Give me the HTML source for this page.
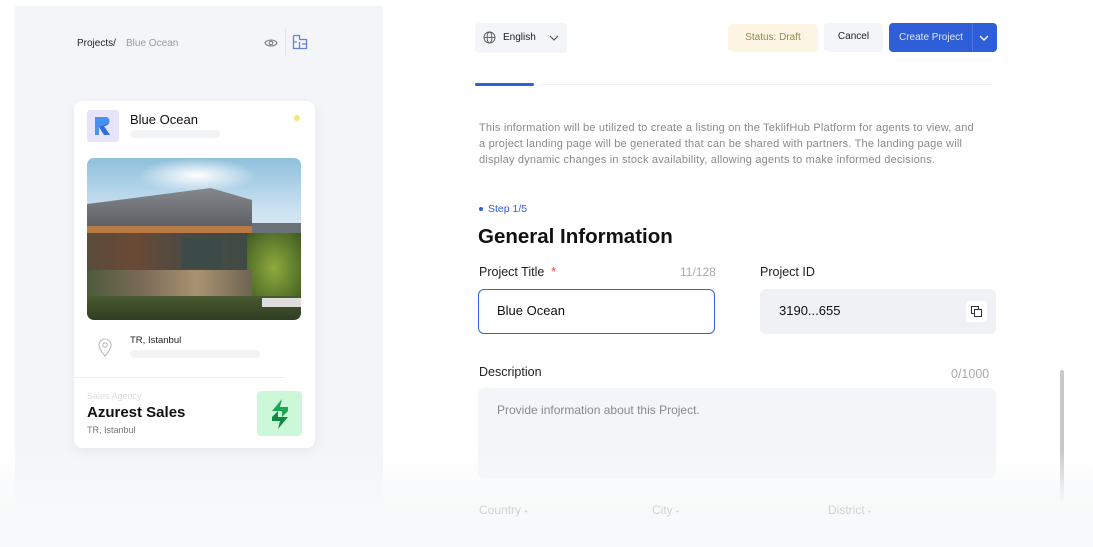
<!DOCTYPE html>
<html><head><meta charset="utf-8"><style>
*{margin:0;padding:0;box-sizing:border-box}
body{width:1093px;height:547px;overflow:hidden;background:#fff;font-family:"Liberation Sans",sans-serif;position:relative;color:#111}
.a{position:absolute}
.t{white-space:nowrap}
</style></head><body>
<div class="a" style="left:15px;top:6px;width:368px;height:541px;background:#f3f5f9"></div>
<div class="a t" style="left:77px;top:38px;font-size:10px;color:#222">Projects/</div>
<div class="a t" style="left:126px;top:38px;font-size:10px;color:#999">Blue Ocean</div>
<svg class="a" style="left:264px;top:37px" width="14" height="12" viewBox="0 0 14 12"><path d="M1 6C3 2 11 2 13 6C11 10 3 10 1 6Z" fill="none" stroke="#777" stroke-width="1.1"/><circle cx="7" cy="6" r="1.8" fill="none" stroke="#777" stroke-width="1.1"/></svg>
<div class="a" style="left:285px;top:28px;width:1px;height:28px;background:#e2e5ea"></div>
<svg class="a" style="left:292px;top:34px" width="16" height="16" viewBox="0 0 16 16"><path d="M1.5 1.5H7.5V5.5M7.5 8V14.5H1.5V1.5M1.5 8H5M7.5 5.5H14.5V14.5H7.5M10 10H14.5" fill="none" stroke="#6b7fd7" stroke-width="1.3"/></svg>
<div class="a" style="left:74px;top:101px;width:241px;height:347px;background:#fff;border-radius:8px;box-shadow:0 4px 14px rgba(0,0,0,.05)"></div>
<div class="a" style="left:87px;top:110px;width:32px;height:32px;background:#e7e3fb;border-radius:3px"></div>
<svg class="a" style="left:94px;top:116px" width="18" height="20" viewBox="0 0 18 20"><path d="M1 1H11C15 1 16 4 15 7C14 9 12 10 10 10L16 19H10L5 11V19H1Z" fill="#2f6ce0"/><path d="M1 1H11C15 1 16 4 15 7L5 11V19H1Z" fill="#4a90f0"/></svg>
<div class="a t" style="left:130px;top:112px;font-size:13px;color:#111">Blue Ocean</div>
<div class="a" style="left:130px;top:130px;width:90px;height:8px;background:#f2f3f5;border-radius:4px"></div>
<div class="a" style="left:294px;top:115px;width:6px;height:6px;background:#f4e47a;border-radius:50%"></div>
<div class="a" style="left:87px;top:158px;width:214px;height:162px;border-radius:7px;overflow:hidden;background:linear-gradient(180deg,#8fc0dc 0%,#c7dff0 30%,#dfe9ef 45%)">
<div class="a" style="left:50px;top:0;width:120px;height:35px;background:radial-gradient(ellipse,#fff 0%,rgba(255,255,255,0) 70%)"></div>
<div class="a" style="left:150px;top:65px;width:64px;height:60px;background:#6b7278"></div>
<div class="a" style="left:160px;top:75px;width:54px;height:70px;background:radial-gradient(ellipse,#8faa3c,#3d5a22)"></div>
<div class="a" style="left:0;top:30px;width:165px;height:40px;background:linear-gradient(180deg,#85888c,#5b5e62);clip-path:polygon(0 40%,75% 0,100% 30%,100% 100%,0 100%)"></div>
<div class="a" style="left:0;top:68px;width:165px;height:7px;background:#b87a45"></div>
<div class="a" style="left:0;top:75px;width:160px;height:50px;background:linear-gradient(90deg,#5a4b3c,#6a4a34 30%,#4d4a44 60%,#3f4a44)"></div>
<div class="a" style="left:95px;top:80px;width:40px;height:30px;background:#3c4a48"></div>
<div class="a" style="left:0;top:112px;width:165px;height:30px;background:linear-gradient(90deg,#4c5a3a,#7a6b58,#a89270,#6e6450)"></div>
<div class="a" style="left:0;top:138px;width:214px;height:24px;background:linear-gradient(180deg,#4a5a30,#2f3e22)"></div>
<div class="a" style="left:175px;top:140px;width:39px;height:9px;background:#ddd"></div>
</div>
<svg class="a" style="left:97px;top:338px" width="16" height="20" viewBox="0 0 16 20"><path d="M8 18C4 13 2 10 2 7A6 6 0 0 1 14 7C14 10 12 13 8 18Z" fill="none" stroke="#bbb" stroke-width="1.1"/><circle cx="8" cy="7" r="2.2" fill="none" stroke="#bbb" stroke-width="1.1"/></svg>
<div class="a t" style="left:130px;top:335px;font-size:9.5px;color:#222">TR, Istanbul</div>
<div class="a" style="left:130px;top:350px;width:130px;height:8px;background:#f2f3f5;border-radius:4px"></div>
<div class="a" style="left:74px;top:377px;width:211px;height:1px;background:#eef0f2"></div>
<div class="a t" style="left:87px;top:391px;font-size:9px;color:#ddd">Sales Agency</div>
<div class="a t" style="left:87px;top:404px;font-size:15px;font-weight:bold;color:#111">Azurest Sales</div>
<div class="a t" style="left:87px;top:425px;font-size:9px;color:#777">TR, Istanbul</div>
<div class="a" style="left:257px;top:391px;width:45px;height:45px;background:#cdf7d9;border-radius:4px"></div>
<svg class="a" style="left:268px;top:397px" width="24" height="34" viewBox="0 0 24 34"><path d="M14 2L4 14H14V20L20 14V10H12Z" fill="#1ca653"/><path d="M10 32L20 20H10V14L4 20V24H12Z" fill="#138a42"/></svg>
<div class="a" style="left:475px;top:23px;width:92px;height:30px;background:#f3f5f9;border-radius:4px"></div>
<svg class="a" style="left:483px;top:31px" width="13" height="13" viewBox="0 0 13 13"><circle cx="6.5" cy="6.5" r="5.5" fill="none" stroke="#555" stroke-width=".9"/><ellipse cx="6.5" cy="6.5" rx="2.4" ry="5.5" fill="none" stroke="#555" stroke-width=".9"/><path d="M1 6.5H12" stroke="#555" stroke-width=".9"/></svg>
<div class="a t" style="left:503px;top:32px;font-size:10px;color:#222">English</div>
<svg class="a" style="left:549px;top:35px" width="10" height="6" viewBox="0 0 10 6"><path d="M1 1L5 5L9 1" fill="none" stroke="#555" stroke-width="1.2"/></svg>
<div class="a" style="left:728px;top:24px;width:90px;height:28px;background:#fdf5e3;border-radius:4px;font-size:10px;color:#9a8750;text-align:center;line-height:28px">Status: Draft</div>
<div class="a" style="left:824px;top:23px;width:59px;height:29px;background:#f3f5f9;border-radius:4px;font-size:10px;color:#222;text-align:center;line-height:28px">Cancel</div>
<div class="a" style="left:889px;top:23px;width:108px;height:29px;background:#2f5ed9;border-radius:4px"></div>
<div class="a t" style="left:899px;top:32px;font-size:10px;color:#dfe7ff">Create Project</div>
<div class="a" style="left:972px;top:23px;width:1px;height:29px;background:#5077e0"></div>
<svg class="a" style="left:979px;top:35px" width="10" height="6" viewBox="0 0 10 6"><path d="M1 1L5 5L9 1" fill="none" stroke="#fff" stroke-width="1.4"/></svg>
<div class="a" style="left:475px;top:83px;width:59px;height:3px;background:#2f5ed9;border-radius:2px"></div>
<div class="a" style="left:539px;top:84px;width:454px;height:1px;background:#eef0f3"></div>
<div class="a t" style="left:479px;top:120px;font-size:11px;line-height:16px;color:#8a8a8a;letter-spacing:.2px">This information will be utilized to create a listing on the TeklifHub Platform for agents to view, and<br>a project landing page will be generated that can be shared with partners. The landing page will<br>display dynamic changes in stock availability, allowing agents to make informed decisions.</div>
<div class="a" style="left:479px;top:207px;width:4px;height:4px;background:#2f5ed9;border-radius:50%"></div>
<div class="a t" style="left:488px;top:203px;font-size:10.5px;color:#2f5ed9">Step 1/5</div>
<div class="a t" style="left:478px;top:225px;font-size:20.5px;font-weight:bold;color:#111">General Information</div>
<div class="a t" style="left:479px;top:265px;font-size:12.5px;color:#222">Project Title <span style="color:#e44">&nbsp;*</span></div>
<div class="a t" style="left:680px;top:265px;font-size:12px;color:#aaa">11/128</div>
<div class="a" style="left:478px;top:289px;width:237px;height:45px;border:1.5px solid #2f66dd;border-radius:6px"></div>
<div class="a t" style="left:497px;top:303px;font-size:13px;color:#111">Blue Ocean</div>
<div class="a t" style="left:760px;top:265px;font-size:12.5px;color:#222">Project ID</div>
<div class="a" style="left:760px;top:289px;width:236px;height:45px;background:#eff1f4;border-radius:6px"></div>
<div class="a t" style="left:779px;top:303px;font-size:13px;color:#111">3190...655</div>
<div class="a" style="left:966px;top:301px;width:21px;height:21px;background:#fff;border-radius:3px"></div>
<svg class="a" style="left:971px;top:306px" width="11" height="11" viewBox="0 0 11 11"><rect x=".5" y=".5" width="7" height="7" fill="none" stroke="#333"/><rect x="3.5" y="3.5" width="7" height="7" fill="#fff" stroke="#333"/></svg>
<div class="a t" style="left:479px;top:365px;font-size:12.5px;color:#222">Description</div>
<div class="a t" style="left:951px;top:367px;font-size:12.5px;color:#aaa">0/1000</div>
<div class="a" style="left:478px;top:388px;width:518px;height:90px;background:#f3f5f8;border-radius:6px"></div>
<div class="a t" style="left:497px;top:403px;font-size:12px;color:#8a8a8a">Provide information about this Project.</div>
<div class="a" style="left:1060px;top:370px;width:4px;height:130px;background:#c8c8c8;border-radius:2px"></div>
<div class="a" style="left:0;top:450px;width:1093px;height:97px;background:linear-gradient(180deg,rgba(250,250,251,0) 0%,rgba(248,249,250,.85) 45%,#f8f9fa 70%)"></div>
<div class="a t" style="left:479px;top:503px;font-size:12px;color:#d2d2d2">Country <span style="font-size:8px">•</span></div>
<div class="a t" style="left:652px;top:503px;font-size:12px;color:#d2d2d2">City <span style="font-size:8px">•</span></div>
<div class="a t" style="left:828px;top:503px;font-size:12px;color:#d2d2d2">District <span style="font-size:8px">•</span></div>
</body></html>
